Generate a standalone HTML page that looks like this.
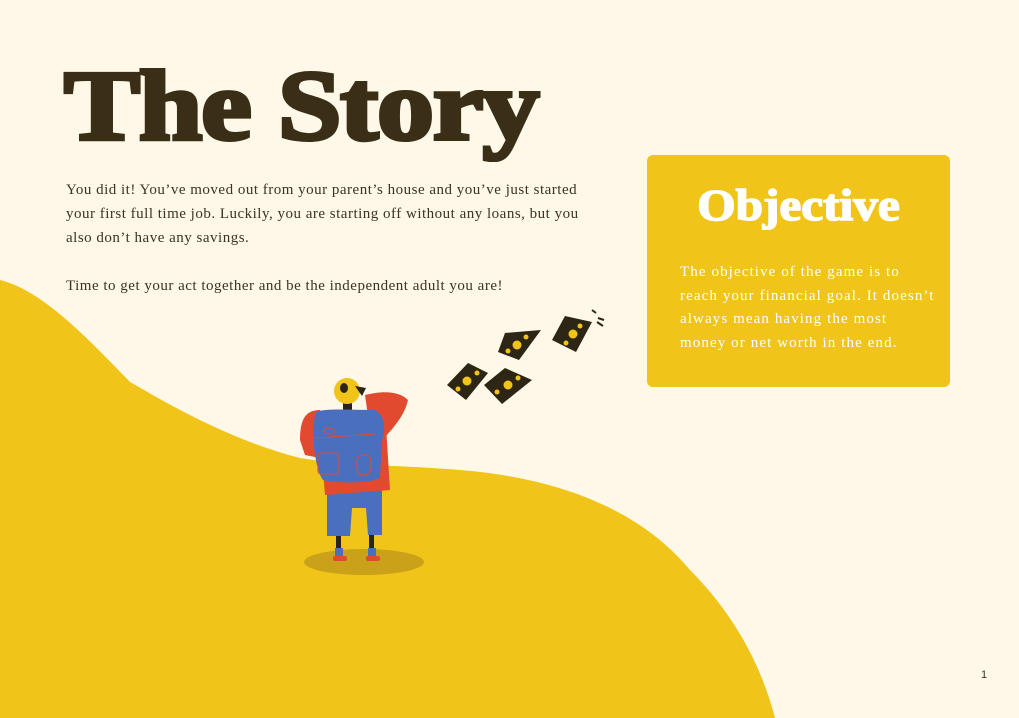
<!DOCTYPE html>
<html><head><meta charset="utf-8"><style>
html,body{margin:0;padding:0}
body{width:1019px;height:718px;background:#fdf8e7;position:relative;overflow:hidden;font-family:"Liberation Serif",serif}
.t{position:absolute;left:64px;top:46px;font-size:100px;font-weight:bold;color:#3a2e17;transform:scaleX(1.14);transform-origin:left top;letter-spacing:-1px;white-space:nowrap;line-height:1.2;-webkit-text-stroke:4px #3a2e17}
.p{position:absolute;left:66px;top:178px;font-size:15px;line-height:24px;color:#3a3328;white-space:nowrap;letter-spacing:.5px}
.box{position:absolute;left:647px;top:155px;width:303px;height:232px;background:#f0c419;border-radius:6px}
.ob{position:absolute;left:647px;width:303px;text-align:center;top:178px;font-size:44px;font-weight:bold;color:#fff;line-height:56px;-webkit-text-stroke:1.5px #fff;transform:scaleX(1.12);transform-origin:center}
.bt{position:absolute;left:680px;top:261px;white-space:nowrap;font-size:15px;line-height:23.5px;color:#fff;letter-spacing:1.1px}
.n{position:absolute;left:981px;top:669px;font-size:11px;color:#3a3328;font-family:"Liberation Sans",sans-serif}
</style></head><body>
<svg width="1019" height="718" style="position:absolute;left:0;top:0">
<path d="M0 280 C40 290 80 330 130 382 C170 405 230 440 300 458 C350 466 400 465 460 470 C560 478 640 510 690 570 C730 610 760 660 775 718 L0 718 Z" fill="#f0c419"/>
<ellipse cx="364" cy="562" rx="60" ry="13" fill="#c9a21a"/>
<rect x="336" y="535" width="5" height="22" fill="#2a2418"/><rect x="369" y="535" width="5" height="22" fill="#2a2418"/>
<rect x="335" y="548" width="8" height="8" fill="#4a6fbf"/><rect x="368" y="548" width="8" height="8" fill="#4a6fbf"/>
<rect x="333" y="556" width="14" height="5" rx="2" fill="#e24a2f"/><rect x="366" y="556" width="14" height="5" rx="2" fill="#e24a2f"/>
<path d="M327 488 L382 488 L382 535 L368 535 L366 508 L352 508 L350 536 L327 536 Z" fill="#4a6fbf"/>
<path d="M318 415 L385 410 L390 490 L325 495 Z" fill="#e24a2f"/>
<path d="M365 395 C385 390 400 392 408 400 C405 415 392 430 382 440 L370 430 Z" fill="#e24a2f"/>
<path d="M300 440 C300 420 305 410 320 410 L330 460 L305 455 Z" fill="#e24a2f"/>
<rect x="343" y="400" width="9" height="14" fill="#2a2418"/>
<ellipse cx="347" cy="391" rx="13" ry="13" fill="#f0c419"/>
<ellipse cx="344" cy="388" rx="4" ry="5" fill="#2a2418"/>
<path d="M355 386 L366 388 L362 396 Z" fill="#2a2418"/>
<path d="M316 412 C325 408 350 410 375 410 C385 415 386 430 382 440 L380 478 C370 483 340 484 323 480 C315 470 310 430 316 412 Z" fill="#4a6fbf"/>
<path d="M315 438 L375 434" stroke="#e24a2f" stroke-width="1" fill="none"/>
<ellipse cx="329" cy="431" rx="5" ry="3" fill="none" stroke="#e24a2f" stroke-width="1"/>
<rect x="318" y="453" width="21" height="21" rx="3" fill="none" stroke="#e24a2f" stroke-width="1"/>
<rect x="357" y="455" width="14" height="20" rx="6" fill="none" stroke="#e24a2f" stroke-width="1"/>
<g fill="#2e2614">
<path d="M447 385 L468 363 L488 373 L466 400 Z"/>
<path d="M484 385 L505 368 L532 380 L502 404 Z"/>
<path d="M498 352 L505 333 L541 330 L519 360 Z"/>
<path d="M552 340 L565 316 L592 322 L576 352 Z"/>
<path d="M592 310 l4 3 M598 318 l6 2 M597 322 l6 4" stroke="#2e2614" stroke-width="2"/>
</g>
<g fill="#f0c419">
<circle cx="467" cy="381" r="4.5"/><circle cx="458" cy="389" r="2.5"/><circle cx="477" cy="373" r="2.5"/>
<circle cx="508" cy="385" r="4.5"/><circle cx="497" cy="392" r="2.5"/><circle cx="518" cy="378" r="2.5"/>
<circle cx="517" cy="345" r="4.5"/><circle cx="508" cy="351" r="2.5"/><circle cx="526" cy="337" r="2.5"/>
<circle cx="573" cy="334" r="4.5"/><circle cx="566" cy="343" r="2.5"/><circle cx="580" cy="326" r="2.5"/>
</g>
</svg>
<div class="t">The Story</div>
<div class="p">You did it! You’ve moved out from your parent’s house and you’ve just started<br>your first full time job. Luckily, you are starting off without any loans, but you<br>also don’t have any savings.<br><br>Time to get your act together and be the independent adult you are!</div>
<div class="box"></div>
<div class="ob">Objective</div>
<div class="bt">The objective of the game is to<br>reach your financial goal. It doesn’t<br>always mean having the most<br>money or net worth in the end.</div>
<div class="n">1</div>
</body></html>
